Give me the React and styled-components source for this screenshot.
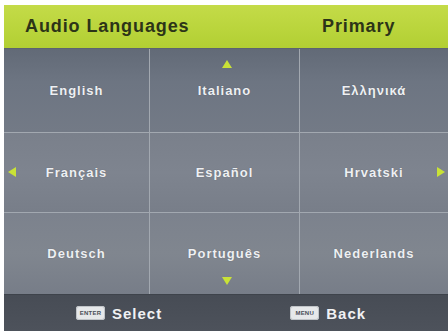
import React from "react";
import styled, { createGlobalStyle } from "styled-components";

const GlobalStyle = createGlobalStyle`
  html, body {
    margin: 0;
    padding: 0;
    background: #ffffff;
  }
  body {
    font-family: "Liberation Sans", Arial, sans-serif;
  }
`;

const languages = [
  { name: "English" },
  { name: "Italiano", arrow: "up" },
  { name: "Ελληνικά" },
  { name: "Français", arrow: "left" },
  { name: "Español" },
  { name: "Hrvatski", arrow: "right" },
  { name: "Deutsch" },
  { name: "Português", arrow: "down" },
  { name: "Nederlands" },
];

function App() {
  return (
    <>
      <GlobalStyle />
      <Screen>
        <Panel>
          <Header>
            <HeaderTitle>Audio Languages</HeaderTitle>
            <HeaderMode>Primary</HeaderMode>
          </Header>
          <Grid>
            {languages.map((lang, i) => (
              <Cell key={lang.name} $row={Math.floor(i / 3)}>
                {lang.arrow && <Arrow $dir={lang.arrow} />}
                <CellLabel>{lang.name}</CellLabel>
              </Cell>
            ))}
          </Grid>
          <Footer>
            <Hint>
              <KeyCap>ENTER</KeyCap>
              <HintLabel>Select</HintLabel>
            </Hint>
            <Hint>
              <KeyCap>MENU</KeyCap>
              <HintLabel>Back</HintLabel>
            </Hint>
          </Footer>
        </Panel>
      </Screen>
    </>
  );
}

export default App;

const Screen = styled.div`
  width: 448px;
  height: 334px;
  padding: 5px 0 3px 4px;
  box-sizing: border-box;
  overflow: hidden;
`;

const Panel = styled.div`
  width: 444px;
  display: flex;
  flex-direction: column;
`;

const Header = styled.div`
  height: 43px;
  display: grid;
  grid-template-columns: 296px 1fr;
  align-items: center;
  background: linear-gradient(180deg, #c4db48 0%, #bad53c 55%, #b2cf33 100%);
  color: #2c3418;
  font-size: 18px;
  font-weight: bold;
  letter-spacing: 0.9px;
`;

const HeaderTitle = styled.div`
  padding-left: 21px;
`;

const HeaderMode = styled.div`
  padding-left: 22px;
`;

const Grid = styled.div`
  display: grid;
  grid-template-columns: 145px 149px 148px;
  grid-template-rows: 83px 79px 81px;
  gap: 1px;
  background: #a2a8b0;
  border-top: 1px solid #5c6470;
`;

const rowBg = [
  "linear-gradient(180deg, #626a77 0%, #6d7582 40%, #737a86 100%)",
  "linear-gradient(180deg, #7a808b 0%, #7e848f 50%, #787e89 100%)",
  "linear-gradient(180deg, #7c828d 0%, #80868f 50%, #777d88 100%)",
];

const Cell = styled.div`
  position: relative;
  display: flex;
  align-items: center;
  justify-content: center;
  background: ${(p) => rowBg[p.$row]};
`;

const CellLabel = styled.span`
  color: #eef0f3;
  font-size: 13px;
  font-weight: bold;
  letter-spacing: 1px;
  text-shadow: 0 0 1px rgba(40, 44, 52, 0.4);
`;

const arrowPlace = {
  up: "top: 11px; left: 72px;",
  down: "bottom: 9px; left: 72px;",
  left: "top: 34px; left: 4px;",
  right: "top: 34px; right: 3px;",
};

const arrowShape = {
  up: "border-left: 5px solid transparent; border-right: 5px solid transparent; border-bottom: 8px solid #c9e236;",
  down: "border-left: 5px solid transparent; border-right: 5px solid transparent; border-top: 8px solid #c9e236;",
  left: "border-top: 5px solid transparent; border-bottom: 5px solid transparent; border-right: 8px solid #c9e236;",
  right: "border-top: 5px solid transparent; border-bottom: 5px solid transparent; border-left: 8px solid #c9e236;",
};

const Arrow = styled.span`
  position: absolute;
  width: 0;
  height: 0;
  ${(p) => arrowPlace[p.$dir]}
  ${(p) => arrowShape[p.$dir]}
`;

const Footer = styled.div`
  height: 36px;
  display: flex;
  align-items: center;
  gap: 128px;
  padding-left: 72px;
  background: linear-gradient(180deg, #474c55 0%, #4d525b 100%);
  border-top: 1px solid #3e434b;
`;

const Hint = styled.div`
  display: flex;
  align-items: center;
  gap: 7px;
`;

const KeyCap = styled.span`
  display: inline-flex;
  align-items: center;
  justify-content: center;
  width: 29px;
  height: 14px;
  border-radius: 3px;
  background: #e6e8ea;
  color: #4a4f57;
  font-size: 6px;
  font-weight: bold;
  letter-spacing: 0.2px;
  box-shadow: inset 0 0 0 1px #c0c4c8;
`;

const HintLabel = styled.span`
  color: #f0f1f3;
  font-size: 15px;
  font-weight: bold;
  letter-spacing: 1px;
`;
